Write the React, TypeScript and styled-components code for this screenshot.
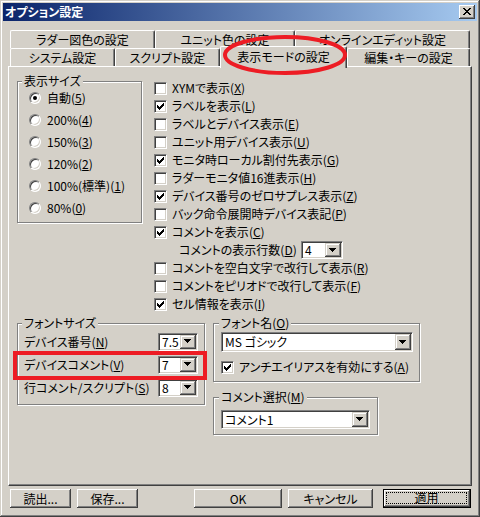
import styled, { createGlobalStyle, css } from "styled-components"

const face = '#d4d0c8'
const shadow = '#808080'
const dark = '#404040'
const red = '#ed1c24'

const GlobalStyle = createGlobalStyle`
    html, body { margin: 0; padding: 0; background: ${face}; }
    body {
        font-family: "Noto Sans CJK JP", "Noto Sans", sans-serif;
        font-size: 12px;
        color: #000;
        font-feature-settings: "palt";
    }
    * { box-sizing: border-box; }
`

const Window = styled.div`
    position: relative;
    width: 480px;
    height: 517px;
    padding: 3px;
    background: ${face};
    box-shadow: inset -1px -1px 0 ${dark}, inset 1px 1px 0 ${face}, inset -2px -2px 0 ${shadow}, inset 2px 2px 0 #fff;
    overflow: hidden;
`
const TitleBar = styled.div`
    height: 18px;
    display: flex;
    align-items: center;
    justify-content: space-between;
    padding: 0 2px 0 2px;
    background: linear-gradient(to right, #0a246a, #a6caf0);
`
const Title = styled.span`
    color: #fff;
    font-weight: bold;
    line-height: 18px;
`
const CloseButton = styled.div`
    width: 16px;
    height: 14px;
    background: ${face};
    display: flex;
    align-items: center;
    justify-content: center;
    padding: 0 1px 1px 0;
    box-shadow: inset -1px -1px 0 ${dark}, inset 1px 1px 0 #fff, inset -2px -2px 0 ${shadow};
`
const Body = styled.div`
    padding: 9px 5px 0 5px;
`
const TabStrip = styled.div`
    display: flex;
    flex-direction: column;
    padding-left: 2px;
`
const TabRow = styled.div`
    display: flex;
    height: 18px;
    align-items: flex-end;
`
const Tab = styled.div<{ $w: number; $active?: boolean }>`
    width: ${p => p.$w}px;
    height: 18px;
    flex: none;
    background: ${face};
    border-top: 1px solid #fff;
    border-left: 1px solid #fff;
    border-right: 1px solid ${dark};
    box-shadow: inset -1px 0 0 ${shadow};
    border-top-left-radius: 2px;
    border-top-right-radius: 2px;
    text-align: center;
    line-height: 17px;
    white-space: nowrap;
    ${p => p.$active && css`
        height: 22px;
        margin-bottom: -2px;
        padding-top: 1px;
        line-height: 18px;
        position: relative;
        z-index: 1;
    `}
`
const Panel = styled.div`
    width: 464px;
    height: 420px;
    border-top: 1px solid #fff;
    border-left: 1px solid #fff;
    border-right: 1px solid ${dark};
    border-bottom: 1px solid ${dark};
    box-shadow: inset -1px -1px 0 ${shadow};
    padding: 7px 8px 0 8px;
`
const Section = styled.div<{ $mt?: number }>`
    display: flex;
    align-items: flex-start;
    margin-top: ${p => p.$mt ?? 0}px;
`
const Group = styled.fieldset<{ $w: number; $h: number; $px: number }>`
    width: ${p => p.$w}px;
    height: ${p => p.$h}px;
    flex: none;
    margin: 0;
    padding: 0 ${p => p.$px}px;
    min-width: 0;
    border: 1px solid ${shadow};
    box-shadow: inset 1px 1px 0 #fff, 1px 1px 0 #fff;
`
const Legend = styled.legend`
    padding: 0 2px;
    margin-left: -2px;
    line-height: 14px;
    background: ${face};
`
const RadioList = styled.div`
    display: flex;
    flex-direction: column;
    margin-top: -1px;
    padding-left: 5px;
`
const RadioRow = styled.div`
    height: 22px;
    display: flex;
    align-items: center;
    gap: 6px;
    line-height: 14px;
`
const RadioCircle = styled.span<{ $on?: boolean }>`
    width: 12px;
    height: 12px;
    flex: none;
    border-radius: 50%;
    background: #fff;
    border: 1px solid;
    border-color: ${shadow} #fff #fff ${shadow};
    box-shadow: inset 1px 1px 0 ${dark}, inset -1px -1px 0 ${face};
    display: flex;
    align-items: center;
    justify-content: center;
    &::after {
        content: "";
        width: 4px;
        height: 4px;
        border-radius: 50%;
        background: ${p => p.$on ? '#000' : 'transparent'};
    }
`
const CheckList = styled.div`
    display: flex;
    flex-direction: column;
    margin: 5px 0 0 12px;
`
const CheckRow = styled.div<{ $indent?: number; $mt?: number; $gap?: number }>`
    height: 18px;
    display: flex;
    align-items: center;
    gap: ${p => p.$gap ?? 5}px;
    line-height: 14px;
    white-space: nowrap;
    padding-left: ${p => p.$indent ?? 0}px;
    margin-top: ${p => p.$mt ?? 0}px;
`
const CheckBox = styled.span`
    width: 13px;
    height: 13px;
    flex: none;
    background: #fff;
    border: 1px solid;
    border-color: ${shadow} #fff #fff ${shadow};
    box-shadow: inset 1px 1px 0 ${dark}, inset -1px -1px 0 ${face};
    display: flex;
    align-items: center;
    justify-content: center;
`
const IndentLabel = styled.span`
    width: 122px;
    flex: none;
`
const Mn = styled.span`
    text-decoration: underline;
    text-underline-offset: 1px;
`
const SizeRow = styled.div`
    height: 23px;
    display: flex;
    align-items: center;
    justify-content: space-between;
    line-height: 14px;
    white-space: nowrap;
`
const RightCol = styled.div`
    display: flex;
    flex-direction: column;
    gap: 8px;
    margin-left: 8px;
`
const ComboBox = styled.div<{ $w: number; $h: number; $mt?: number }>`
    width: ${p => p.$w}px;
    height: ${p => p.$h}px;
    flex: none;
    margin-top: ${p => p.$mt ?? 0}px;
    display: flex;
    padding: 1px;
    background: #fff;
    border: 1px solid;
    border-color: ${shadow} #fff #fff ${shadow};
    box-shadow: inset 1px 1px 0 ${dark}, inset -1px -1px 0 ${face};
`
const ComboText = styled.span`
    flex: 1;
    padding-left: 2px;
    display: flex;
    align-items: center;
    line-height: 12px;
    white-space: nowrap;
`
const ComboButton = styled.span`
    width: 16px;
    flex: none;
    background: ${face};
    box-shadow: inset -1px -1px 0 ${dark}, inset 1px 1px 0 ${face}, inset -2px -2px 0 ${shadow}, inset 2px 2px 0 #fff;
    display: flex;
    align-items: center;
    justify-content: center;
    padding: 0 1px 1px 0;
`
const ButtonRow = styled.div`
    display: flex;
    margin-top: 3px;
    padding-left: 2px;
`
const Button = styled.div<{ $w: number; $ml: number; $default?: boolean }>`
    width: ${p => p.$w}px;
    height: 19px;
    flex: none;
    margin-left: ${p => p.$ml}px;
    background: ${face};
    display: flex;
    align-items: center;
    justify-content: center;
    line-height: 14px;
    box-shadow: inset -1px -1px 0 ${dark}, inset 1px 1px 0 #fff, inset -2px -2px 0 ${shadow};
    ${p => p.$default && css`
        border: 1px solid #000;
        padding: 2px 3px 3px 2px;
    `}
`
const FocusRing = styled.span`
    flex: 1;
    align-self: stretch;
    display: flex;
    align-items: center;
    justify-content: center;
    border: 1px dotted #000;
`
const Ellipse = styled.svg`
    position: absolute;
    left: 221px;
    top: 33px;
    z-index: 2;
`
const RedBox = styled.div`
    position: absolute;
    left: 13px;
    top: 351px;
    width: 194px;
    height: 29px;
    border: 4px solid ${red};
    z-index: 2;
`

function Pixels({ rows }: { rows: string[] }) {
    return (
        <svg width={rows[0].length} height={rows.length} shapeRendering="crispEdges">
            {rows.flatMap((r, y) => r.split('').map((c, x) =>
                c === 'X' ? <rect key={`${x}-${y}`} x={x} y={y} width={1} height={1} fill="#000" /> : null
            ))}
        </svg>
    )
}

const CROSS = ['XX....XX', '.XX..XX.', '..XXXX..', '...XX...', '..XXXX..', '.XX..XX.', 'XX....XX']
const TICK = ['......X', '.....XX', 'X...XXX', 'XX.XXX.', 'XXXXX..', '.XXX...', '..X....']
const ARROW = ['XXXXXXX', '.XXXXX.', '..XXX..', '...X...']

function Check({ on }: { on?: boolean }) {
    return <CheckBox>{on && <Pixels rows={TICK} />}</CheckBox>
}

function Combo({ w, h, text, mt }: { w: number; h: number; text: string; mt?: number }) {
    return (
        <ComboBox $w={w} $h={h} $mt={mt}>
            <ComboText>{text}</ComboText>
            <ComboButton><Pixels rows={ARROW} /></ComboButton>
        </ComboBox>
    )
}

const sizes = [
    { label: '自動', key: '5', on: true },
    { label: '200%', key: '4' },
    { label: '150%', key: '3' },
    { label: '120%', key: '2' },
    { label: '100%(標準)', key: '1' },
    { label: '80%', key: '0' },
]

const checks = [
    { label: 'XYMで表示', key: 'X' },
    { label: 'ラベルを表示', key: 'L', on: true },
    { label: 'ラベルとデバイス表示', key: 'E' },
    { label: 'ユニット用デバイス表示', key: 'U' },
    { label: 'モニタ時ローカル割付先表示', key: 'G', on: true },
    { label: 'ラダーモニタ値16進表示', key: 'H' },
    { label: 'デバイス番号のゼロサプレス表示', key: 'Z', on: true },
    { label: 'バック命令展開時デバイス表記', key: 'P' },
    { label: 'コメントを表示', key: 'C', on: true },
]

const checks2 = [
    { label: 'コメントを空白文字で改行して表示', key: 'R' },
    { label: 'コメントをピリオドで改行して表示', key: 'F' },
    { label: 'セル情報を表示', key: 'I', on: true },
]

const fontSizes = [
    { label: 'デバイス番号', key: 'N', value: '7.5' },
    { label: 'デバイスコメント', key: 'V', value: '7' },
    { label: '行コメント/スクリプト', key: 'S', value: '8' },
]

export default function App() {
    return (
        <>
            <GlobalStyle />
            <Window>
                <TitleBar>
                    <Title>オプション設定</Title>
                    <CloseButton><Pixels rows={CROSS} /></CloseButton>
                </TitleBar>
                <Body>
                    <TabStrip>
                        <TabRow>
                            <Tab $w={145}>ラダー図色の設定</Tab>
                            <Tab $w={140}>ユニット色の設定</Tab>
                            <Tab $w={175}>オンラインエディット設定</Tab>
                        </TabRow>
                        <TabRow>
                            <Tab $w={105}>システム設定</Tab>
                            <Tab $w={105}>スクリプト設定</Tab>
                            <Tab $w={127} $active>表示モードの設定</Tab>
                            <Tab $w={123}>編集・キーの設定</Tab>
                        </TabRow>
                    </TabStrip>
                    <Panel>
                        <Section>
                            <Group $w={125} $h={149} $px={6}>
                                <Legend>表示サイズ</Legend>
                                <RadioList>
                                    {sizes.map(s => (
                                        <RadioRow key={s.key}>
                                            <RadioCircle $on={s.on} />
                                            <span>{s.label}(<Mn>{s.key}</Mn>)</span>
                                        </RadioRow>
                                    ))}
                                </RadioList>
                            </Group>
                            <CheckList>
                                {checks.map(c => (
                                    <CheckRow key={c.key}>
                                        <Check on={c.on} />
                                        <span>{c.label}(<Mn>{c.key}</Mn>)</span>
                                    </CheckRow>
                                ))}
                                <CheckRow $indent={25} $gap={0}>
                                    <IndentLabel>コメントの表示行数(<Mn>D</Mn>)</IndentLabel>
                                    <Combo w={42} h={18} text="4" />
                                </CheckRow>
                                {checks2.map(c => (
                                    <CheckRow key={c.key}>
                                        <Check on={c.on} />
                                        <span>{c.label}(<Mn>{c.key}</Mn>)</span>
                                    </CheckRow>
                                ))}
                            </CheckList>
                        </Section>
                        <Section $mt={3}>
                            <Group $w={188} $h={89} $px={6}>
                                <Legend>フォントサイズ</Legend>
                                {fontSizes.map(f => (
                                    <SizeRow key={f.key}>
                                        <span>{f.label}(<Mn>{f.key}</Mn>)</span>
                                        <Combo w={40} h={18} text={f.value} />
                                    </SizeRow>
                                ))}
                            </Group>
                            <RightCol>
                                <Group $w={207} $h={66} $px={7}>
                                    <Legend>フォント名(<Mn>O</Mn>)</Legend>
                                    <Combo w={192} h={20} text="MS ゴシック" mt={2} />
                                    <CheckRow $mt={6}>
                                        <Check on />
                                        <span>アンチエイリアスを有効にする(<Mn>A</Mn>)</span>
                                    </CheckRow>
                                </Group>
                                <Group $w={165} $h={45} $px={7}>
                                    <Legend>コメント選択(<Mn>M</Mn>)</Legend>
                                    <Combo w={149} h={19} text="コメント1" mt={6} />
                                </Group>
                            </RightCol>
                        </Section>
                    </Panel>
                    <ButtonRow>
                        <Button $w={61} $ml={0}>読出...</Button>
                        <Button $w={61} $ml={6}>保存...</Button>
                        <Button $w={88} $ml={56}>OK</Button>
                        <Button $w={85} $ml={6}>キャンセル</Button>
                        <Button $w={88} $ml={10} $default><FocusRing>適用</FocusRing></Button>
                    </ButtonRow>
                </Body>
                <Ellipse width={128} height={44}>
                    <ellipse cx={64} cy={22} rx={60} ry={18} fill="none" stroke={red} strokeWidth={4} />
                </Ellipse>
                <RedBox />
            </Window>
        </>
    )
}
